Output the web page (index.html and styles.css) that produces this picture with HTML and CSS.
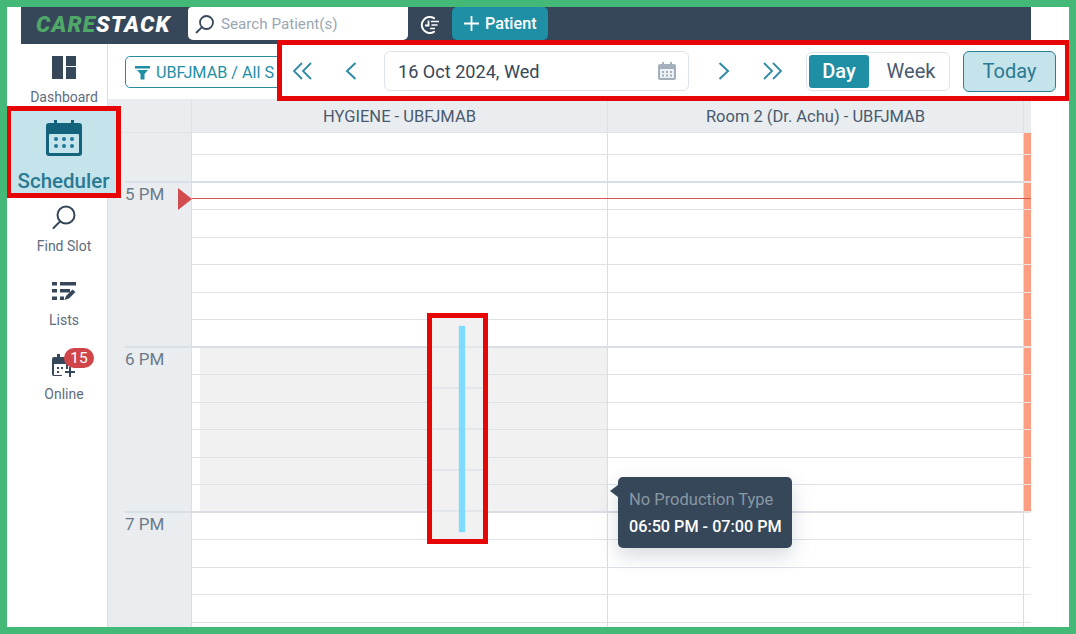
FILE: index.html
```html
<!DOCTYPE html>
<html lang="en">
<head>
    <meta charset="UTF-8">
    <title>CareStack Scheduler</title>
    <link rel="stylesheet" href="styles.css">
</head>
<body>
    <div class="app">
        <!-- Top bar -->
        <header class="topbar">
            <div class="logo"><span class="logo-care">CARE</span><span class="logo-stack">STACK</span></div>
            <div class="search">
                <svg class="search-icon" width="20" height="20" viewBox="0 0 20 20" fill="none" stroke="#36475a" stroke-width="1.8">
                    <circle cx="11.5" cy="8.5" r="6.5"/>
                    <path d="M7 13.2 1.5 18.5" stroke-linecap="round"/>
                </svg>
                <span>Search Patient(s)</span>
            </div>
            <svg class="clock-icon" width="22" height="20" viewBox="0 0 22 20" fill="none" stroke="#fff" stroke-width="2">
                <path d="M15 3.2A8 8 0 1 0 15 16.8" stroke-linecap="round"/>
                <path d="M9.5 5.5V10.5H6" stroke-width="1.8"/>
                <path d="M12 6.5h8M12.5 10h6M11 13.5h5" stroke-width="1.7"/>
            </svg>
            <button class="add-patient">
                <svg width="15" height="15" viewBox="0 0 15 15" stroke="#fff" stroke-width="1.800">
                    <path d="M7.500 0v15M0 7.500h15"/>
                </svg>
                Patient
            </button>
        </header>

        <div class="workspace">
            <!-- Side menu -->
            <nav class="sidebar">
                <a class="menu-item dashboard">
                    <svg width="24" height="24" viewBox="0 0 24 24" fill="#36475a">
                        <rect x="0" y="0" width="11" height="23"/>
                        <rect x="14" y="0" width="10" height="10"/>
                        <rect x="14" y="11" width="10" height="12"/>
                    </svg>
                    <span>Dashboard</span>
                </a>
                <a class="menu-item scheduler">
                    <svg width="36" height="36" viewBox="0 0 36 36">
                        <path d="M3 3h5V0h3v3h14V0h3v3h5a3 3 0 0 1 3 3v27a3 3 0 0 1-3 3H3a3 3 0 0 1-3-3V6a3 3 0 0 1 3-3Z" fill="#14637d"/>
                        <rect x="3" y="14" width="30" height="19" rx="1" fill="#c5e3ea"/>
                        <g fill="#1f7896">
                            <circle cx="10" cy="19" r="2"/><circle cx="18" cy="19" r="2"/><circle cx="26" cy="19" r="2"/>
                            <circle cx="10" cy="26" r="2"/><circle cx="18" cy="26" r="2"/><circle cx="26" cy="26" r="2"/>
                        </g>
                    </svg>
                    <span>Scheduler</span>
                </a>
                <a class="menu-item find-slot">
                    <svg width="24" height="25" viewBox="0 0 24 25" fill="none" stroke="#36475a" stroke-width="2">
                        <circle cx="14" cy="10" r="8.5"/>
                        <path d="M8 16.5 1.5 23" stroke-linecap="round"/>
                    </svg>
                    <span>Find Slot</span>
                </a>
                <a class="menu-item lists">
                    <svg width="24" height="20" viewBox="0 0 24 20" fill="#36475a">
                        <rect x="0" y="1" width="5" height="3.5"/><rect x="8" y="1" width="16" height="3.5"/>
                        <rect x="0" y="8" width="5" height="3.5"/><rect x="8" y="8" width="10" height="3.5"/>
                        <rect x="0" y="15.500" width="5" height="3.5"/><rect x="8" y="15.500" width="4" height="3.500"/>
                        <path d="M12.500 19 14 15 20.500 8.500 23.500 11 17 17.500Z"/>
                    </svg>
                    <span>Lists</span>
                </a>
                <a class="menu-item online">
                    <svg width="24" height="25" viewBox="0 0 24 25">
                        <path d="M2 4h3V1h3v3h6a2 2 0 0 1 2 2v10h-3v3h-3v4H2a2 2 0 0 1-2-2V6a2 2 0 0 1 2-2Z" fill="#36475a"/>
                        <rect x="2" y="11" width="12" height="11" fill="#fff"/>
                        <g fill="#36475a">
                            <rect x="5" y="14" width="2" height="2"/><rect x="9" y="14" width="2" height="2"/>
                            <rect x="5" y="18" width="2" height="2"/>
                            <path d="M17 14h2v4h4v2h-4v4h-2v-4h-4v-2h4Z"/>
                        </g>
                    </svg>
                    <span>Online</span>
                    <b class="badge">15</b>
                </a>
            </nav>

            <main class="main">
                <!-- Toolbar -->
                <div class="toolbar">
                    <div class="filter">
                        <svg width="15" height="15" viewBox="0 0 15 15" fill="#1e8fa5">
                            <path d="M0 1h15v2.500H0ZM2 5h11L9.500 9v5.500h-4V9Z"/>
                        </svg>
                        <span>UBFJMAB / All S</span>
                    </div>
                    <div class="date-nav">
                        <svg class="double-prev" width="20" height="18" viewBox="0 0 20 18" fill="none" stroke="#2f8ba5" stroke-width="1.800">
                            <path d="M10 1 2 9l8 8M19 1l-8 8 8 8"/>
                        </svg>
                        <svg class="prev" width="12" height="18" viewBox="0 0 12 18" fill="none" stroke="#2f8ba5" stroke-width="2">
                            <path d="M10.500 1 2 9l8.500 8"/>
                        </svg>
                        <div class="date-field">
                            <span>16 Oct 2024, Wed</span>
                            <svg width="18" height="18" viewBox="0 0 18 18">
                                <path d="M2 2h2V0h2v2h6V0h2v2h2a2 2 0 0 1 2 2v12a2 2 0 0 1-2 2H2a2 2 0 0 1-2-2V4a2 2 0 0 1 2-2Z" fill="#a3afbb"/>
                                <rect x="2" y="7" width="14" height="9" fill="#eef1f4"/>
                                <g fill="#a3afbb">
                                    <rect x="4" y="9" width="2" height="2"/><rect x="8" y="9" width="2" height="2"/><rect x="12" y="9" width="2" height="2"/>
                                    <rect x="4" y="12.500" width="2" height="2"/><rect x="8" y="12.500" width="2" height="2"/><rect x="12" y="12.500" width="2" height="2"/>
                                </g>
                            </svg>
                        </div>
                        <svg class="next" width="12" height="18" viewBox="0 0 12 18" fill="none" stroke="#2f8ba5" stroke-width="2">
                            <path d="M1.500 1 10 9l-8.500 8"/>
                        </svg>
                        <svg class="double-next" width="20" height="18" viewBox="0 0 20 18" fill="none" stroke="#2f8ba5" stroke-width="1.800">
                            <path d="M1 1l8 8-8 8M10 1l8 8-8 8"/>
                        </svg>
                        <div class="view-switch">
                            <span class="view-day">Day</span>
                            <span class="view-week">Week</span>
                        </div>
                        <button class="today">Today</button>
                    </div>
                </div>

                <!-- Column headers -->
                <div class="grid-head">
                    <div class="head-time"></div>
                    <div class="head-col">HYGIENE - UBFJMAB</div>
                    <div class="head-col">Room 2 (Dr. Achu) - UBFJMAB</div>
                    <div class="head-edge"></div>
                </div>

                <!-- Time grid -->
                <div class="grid-body">
                    <div class="time-col">
                        <div class="hour">5 PM</div>
                        <div class="hour">6 PM</div>
                        <div class="hour">7 PM</div>
                    </div>
                    <div class="col col-hygiene">
                        <div class="callout">
                            <div class="appt-bar"></div>
                        </div>
                    </div>
                    <div class="col"></div>
                    <div class="col-edge"></div>

                    <div class="now-line"></div>
                    <div class="now-arrow"></div>

                    <div class="tooltip">
                        <div class="tooltip-type">No Production Type</div>
                        <div class="tooltip-time">06:50 PM - 07:00 PM</div>
                    </div>
                </div>
            </main>
        </div>
    </div>
</body>
</html>
```

FILE: styles.css
```css
* {
    box-sizing: border-box;
    margin: 0;
    padding: 0;
}

html,
body {
    height: 634px;
    overflow: hidden;
}

body {
    font-family: Roboto, 'Liberation Sans', sans-serif;
    background: #fff;
    border: 7px solid #43b877;
    color: #36475a;
}

svg {
    flex: none;
}

.app {
    width: 1010px;
    height: 620px;
    margin-left: 14px;
    display: flex;
    flex-direction: column;
}

/* Top bar */
.topbar {
    height: 37px;
    flex: none;
    background: #36475a;
    display: flex;
    align-items: flex-start;
}

.logo {
    width: 167px;
    height: 33px;
    padding-left: 15px;
    font-size: 22.500px;
    line-height: 34px;
    font-weight: 900;
    font-style: italic;
    letter-spacing: 1.100px;
    white-space: nowrap;
}

.logo-care {
    color: #4fa868;
}

.logo-stack {
    color: #fff;
}

.search {
    width: 220px;
    height: 33px;
    background: #fff;
    border-radius: 4px 0 5px 5px;
    display: flex;
    align-items: center;
    gap: 6px;
    padding-left: 7px;
    font-size: 15.200px;
    color: #9aa6b2;
}

.clock-icon {
    margin: 8px 0 0 11px;
}

.add-patient {
    width: 96px;
    height: 33px;
    margin-left: 11px;
    background: #1e8fa5;
    border: none;
    border-radius: 5px;
    color: #fff;
    font-family: inherit;
    font-size: 16.200px;
    font-weight: 500;
    display: flex;
    align-items: center;
    gap: 6px;
    padding-left: 12px;
}

/* Side menu */
.workspace {
    flex: 1;
    display: flex;
    min-height: 0;
}

.sidebar {
    width: 87px;
    flex: none;
    border-right: 1px solid #d8dde6;
    display: flex;
    flex-direction: column;
    align-items: stretch;
    position: relative;
    z-index: 3;
}

.menu-item {
    display: flex;
    flex-direction: column;
    align-items: center;
    font-size: 14px;
    color: #5d6d7e;
    position: relative;
}

.dashboard {
    height: 62px;
    padding-top: 12px;
    gap: 9px;
}

.scheduler {
    height: 92px;
    margin: 0 -14px 0 -15px;
    border: 5px solid #e60606;
    background: #c5e3ea;
    padding-top: 9px;
    font-size: 20.500px;
    font-weight: 500;
    color: #2a7a92;
    gap: 13px;
    line-height: 24px;
}

.find-slot {
    height: 74px;
    padding-top: 7px;
    gap: 8px;
}

.lists {
    height: 74px;
    padding-top: 9px;
    gap: 11px;
}

.online {
    padding-top: 7px;
    gap: 8px;
}

.badge {
    position: absolute;
    left: 43px;
    top: 2px;
    width: 30px;
    height: 20px;
    border-radius: 10px;
    background: #d0454a;
    color: #fff;
    font-size: 15.500px;
    font-weight: 400;
    line-height: 20px;
    text-align: center;
}

/* Toolbar */
.main {
    flex: 1;
    min-width: 0;
    display: flex;
    flex-direction: column;
}

.toolbar {
    height: 55px;
    flex: none;
    display: flex;
    align-items: flex-start;
    padding: 12px 0 0 17px;
    position: relative;
}

.filter {
    width: 180px;
    height: 32px;
    flex: none;
    border: 1px solid #2a8ca3;
    border-radius: 5px;
    display: flex;
    align-items: center;
    gap: 6px;
    padding-left: 9px;
    font-size: 16.200px;
    color: #1e8fa5;
    white-space: nowrap;
}

.date-nav {
    position: absolute;
    left: 169px;
    top: -4px;
    width: 793px;
    height: 61px;
    border: 5px solid #e60606;
    background: #fff;
    display: flex;
    align-items: center;
    padding-top: 1px;
}

.double-prev {
    margin-left: 10px;
}

.prev {
    margin-left: 33px;
}

.date-field {
    width: 305px;
    height: 40px;
    margin-left: 27px;
    border: 1px solid #dde3ea;
    border-radius: 6px;
    display: flex;
    align-items: center;
    justify-content: space-between;
    padding: 0 12px 0 13px;
    font-size: 18.100px;
    color: #36475a;
}

.next {
    margin-left: 29px;
}

.double-next {
    margin-left: 33px;
}

.view-switch {
    width: 144px;
    height: 39px;
    margin-left: 23px;
    border: 1px solid #dde3ea;
    border-radius: 6px;
    display: flex;
    align-items: center;
    padding-left: 2px;
    font-size: 20px;
}

.view-day {
    width: 60px;
    height: 33px;
    background: #1e8fa5;
    border-radius: 3px;
    color: #fff;
    font-weight: 500;
    line-height: 33px;
    text-align: center;
}

.view-week {
    flex: 1;
    padding-left: 4px;
    text-align: center;
    color: #4a5a6e;
}

.today {
    width: 93px;
    height: 41px;
    margin-left: 13px;
    background: #c5e3ea;
    border: 1.500px solid #2a7f94;
    border-radius: 6px;
    color: #2a7a92;
    font-family: inherit;
    font-size: 20px;
}

/* Column headers */
.grid-head {
    height: 34px;
    flex: none;
    display: flex;
    background: #e9edf0;
    border-bottom: 1px solid #e0e4e9;
    font-size: 16.500px;
    color: #4a5a6e;
}

.head-time {
    width: 84px;
    border-right: 1px solid #dde2e9;
}

.head-col {
    width: 416px;
    border-right: 1px solid #dde2e9;
    text-align: center;
    line-height: 36px;
}

.head-edge {
    flex: 1;
}

/* Time grid */
.grid-body {
    flex: 1;
    min-height: 0;
    display: flex;
    position: relative;
    overflow: hidden;
}

.time-col {
    width: 84px;
    flex: none;
    padding-top: 48px;
    background: #e9edf0;
    border-right: 1px solid #d8dde6;
}

.hour {
    height: 165px;
    margin-left: 17px;
    padding-top: 2px;
    border-top: 2px solid #d8dfe6;
    font-size: 17px;
    line-height: 19px;
    color: #6c7a89;
}

.col,
.col-edge {
    background-image: linear-gradient(to bottom,
        #d8dde6 0 2px,
        transparent 2px 28px, #dde2e9 28px 29px,
        transparent 29px 56px, #dde2e9 56px 57px,
        transparent 57px 83px, #dde2e9 83px 84px,
        transparent 84px 111px, #dde2e9 111px 112px,
        transparent 112px 138px, #dde2e9 138px 139px,
        transparent 139px);
    background-size: 100% 165px;
    background-position: 0 48px;
}

.col {
    width: 416px;
    flex: none;
    border-right: 1px solid #d8dde6;
    position: relative;
}

/* blocked time from 6 PM to 7 PM */
.col-hygiene {
    background-image:
        linear-gradient(to bottom,
            #d8dde6 0 2px,
            transparent 2px 28px, #dde2e9 28px 29px,
            transparent 29px 56px, #dde2e9 56px 57px,
            transparent 57px 83px, #dde2e9 83px 84px,
            transparent 84px 111px, #dde2e9 111px 112px,
            transparent 112px 138px, #dde2e9 138px 139px,
            transparent 139px),
        linear-gradient(#f1f1f1, #f1f1f1);
    background-size: 100% 165px, 100% 165px;
    background-position: 0 48px, 8px 213px;
    background-repeat: repeat, no-repeat;
}

.col-edge {
    flex: 1;
    background-image:
        linear-gradient(to bottom,
            #e6e4e4 0 2px,
            transparent 2px 28px, #e9e6e6 28px 29px,
            transparent 29px 56px, #e9e6e6 56px 57px,
            transparent 57px 83px, #e9e6e6 83px 84px,
            transparent 84px 111px, #e9e6e6 111px 112px,
            transparent 112px 138px, #e9e6e6 138px 139px,
            transparent 139px),
        linear-gradient(#ff9e80, #ff9e80);
    background-size: 100% 165px, 100% 379px;
    background-position: 0 48px, 0 0;
    background-repeat: repeat, no-repeat;
}

.callout {
    position: absolute;
    left: 235px;
    top: 180px;
    width: 61px;
    height: 231px;
    border: 5px solid #e60606;
    padding: 8px 0 0 27px;
    background-color: #f1f1f1;
    background-image: linear-gradient(to bottom, #e3e6eb 0 2px, transparent 2px);
    background-size: 100% 41px;
    background-position: 0 28px;
}

.appt-bar {
    width: 6px;
    height: 206px;
    background: #7fdbff;
    box-shadow: 0 0 1px #7fdbff;
}

.now-line {
    position: absolute;
    left: 84px;
    right: 0;
    top: 65px;
    height: 1px;
    background: #d9534f;
}

.now-arrow {
    position: absolute;
    left: 70px;
    top: 55px;
    border-left: 14px solid #d24b4f;
    border-top: 11px solid transparent;
    border-bottom: 11px solid transparent;
}

.tooltip {
    position: absolute;
    left: 510px;
    top: 344px;
    width: 174px;
    height: 71px;
    padding: 14px 0 0 11px;
    background: #36475a;
    border-radius: 5px;
    box-shadow: 0 8px 20px rgba(54, 71, 90, 0.2);
    font-size: 16.500px;
    line-height: 18px;
}

.tooltip::before {
    content: '';
    position: absolute;
    left: -8px;
    top: 8px;
    border-right: 8px solid #36475a;
    border-top: 6px solid transparent;
    border-bottom: 6px solid transparent;
}

.tooltip-type {
    color: #8a97a3;
    margin-bottom: 9px;
}

.tooltip-time {
    color: #fff;
    font-size: 16.200px;
    font-weight: 500;
}
```
